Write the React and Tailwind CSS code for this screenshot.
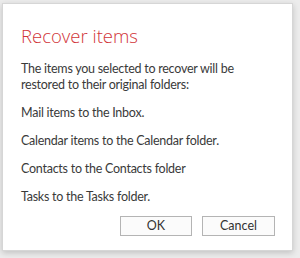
export default function App() {
  const font = { fontFamily: 'Lato, "Open Sans", sans-serif' };
  return (
    <div className="w-[300px] h-[258px] bg-[#ececec] overflow-hidden flex" style={font}>
      <div className="ml-[2px] mt-[3px] w-[291px] h-[248px] bg-white border border-[#d6d6d6] shadow-[0_2px_6px_rgba(0,0,0,0.18)] pl-[18px] pr-[16px] flex flex-col">
        <h1 className="mt-[19px] text-[18.5px] leading-[26px] font-light text-[#d13438]" style={{ fontFamily: '"Open Sans", sans-serif' }}>Recover items</h1>
        <div className="mt-[12px] text-[12.5px] tracking-[-0.25px] leading-[16px] text-[#3a3a3a] flex flex-col gap-[12px]">
          <p>The items you selected to recover will be restored to their original folders:</p>
          <p>Mail items to the Inbox.</p>
          <p>Calendar items to the Calendar folder.</p>
          <p>Contacts to the Contacts folder</p>
          <p>Tasks to the Tasks folder.</p>
        </div>
        <div className="mt-[11px] flex justify-end gap-[10px] pr-[1px]">
          <button className="w-[72px] h-[20px] border border-[#b4b4b4] bg-[#fbfbfb] text-[12.5px] leading-none text-[#333333]">OK</button>
          <button className="w-[73px] h-[20px] border border-[#b4b4b4] bg-[#fbfbfb] text-[12.5px] leading-none text-[#333333]">Cancel</button>
        </div>
      </div>
    </div>
  );
}
